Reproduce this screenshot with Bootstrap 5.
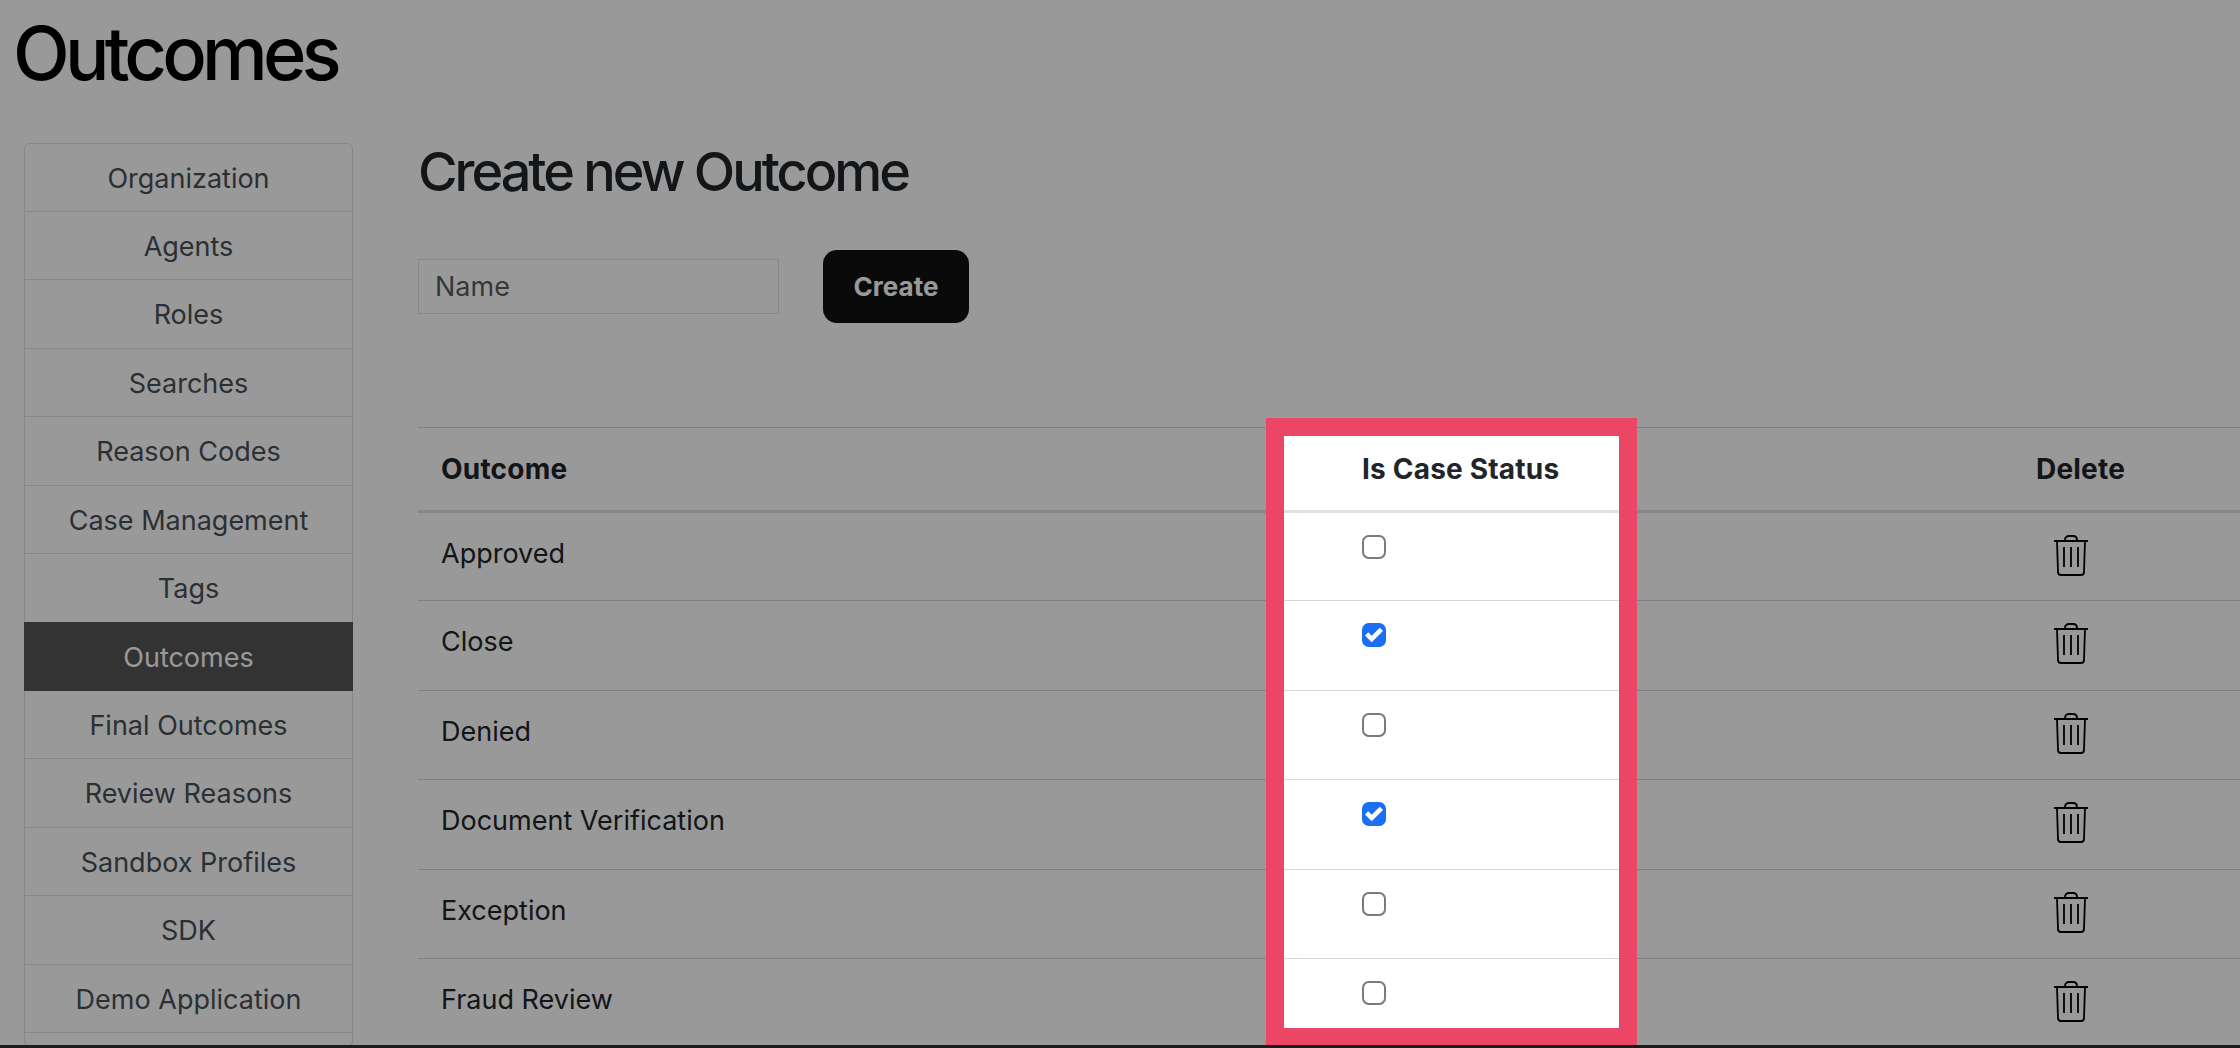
<!DOCTYPE html>
<html lang="en"><head><meta charset="utf-8"><title>Outcomes</title>
<link href="https://cdn.jsdelivr.net/npm/bootstrap@5.3.0/dist/css/bootstrap.min.css" rel="stylesheet">
<style>
html{font-size:27px;height:100%;overflow:hidden}
body{font-family:Inter,"Liberation Sans",sans-serif;height:1048px;overflow:hidden;position:relative;color:#000}
.page-title{font-size:74px;font-weight:500;line-height:72px;letter-spacing:-4.8px;margin:0;padding:17px 0 1px 13px;color:#000}
.side-wrap{width:329px;margin-left:24px;flex:none}
.side-wrap .list-group{border-radius:6px}
.side-wrap .list-group-item{color:#495057;text-align:center;padding:15px 1rem 11px;height:68.57px;line-height:40px;white-space:nowrap}
.side-wrap .list-group-item.active{background:#555;border-color:#555;color:#fff}
.side-wrap .list-group-item.stub-item{height:14px;padding:0}
.main-pane{margin-left:65px;flex:1 1 auto;min-width:0}
.pane-title{font-size:54px;font-weight:500;line-height:60px;letter-spacing:-3px;margin:-1px 0 48px;color:#212529}
.name-input{width:361px;height:55px;border-radius:0;padding:0 16px;font-size:27px}
.create-btn{width:146px;height:73px;border-radius:14px;background:#111;border:0;color:#fff;font-weight:700;font-size:26px;margin-left:44px;padding:0}
.outcome-table{table-layout:fixed;margin:104px 0 0;width:100%}
.outcome-table th,.outcome-table td{padding:21px 23px;border-color:#d3d8dd;line-height:40px}
.outcome-table thead th{border-top:1px solid #d3d8dd;border-bottom:3px solid #dee2e6;height:83px;font-size:28px;letter-spacing:.2px;color:#212529;padding-top:21px;padding-bottom:21px}
.outcome-table tbody td{height:89.4px;padding-top:21px;padding-bottom:23px}
.col-a{width:921px}.col-b{width:674px}.col-c{width:227px}
.form-check-input{margin:1px 0 0;display:block;border:2px solid #7a7a7a;width:24px;height:24px;border-radius:5px;background-size:90%;background-position:45% 50%}
.form-check-input:checked{background-color:#1c6ef2;border-color:#1c6ef2;background-image:url("data:image/svg+xml,%3csvg xmlns='http://www.w3.org/2000/svg' viewBox='0 0 8 8'%3e%3cpath fill='%23fff' d='M6.564.75l-3.59 3.612-1.538-1.55L0 4.26 2.974 7.25 8 2.193z'/%3e%3c/svg%3e")}
.trash-svg{display:block;width:36px;height:41px;margin:1px 0 0 17px}
.spot{position:absolute;left:1266px;top:418px;width:371px;height:628px;border:18px solid #ec4667;box-shadow:0 0 0 3000px rgba(0,0,0,.4);z-index:10;pointer-events:none}
.bottom-strip{position:absolute;left:0;right:0;bottom:0;height:3px;background:#1c1c1c;z-index:11}
</style></head><body>
<h1 class="page-title">Outcomes</h1>
<div class="d-flex" style="padding-top:53px">
  <div class="side-wrap">
    <div class="list-group">
      <a class="list-group-item list-group-item-action" href="#">Organization</a>
      <a class="list-group-item list-group-item-action" href="#">Agents</a>
      <a class="list-group-item list-group-item-action" href="#">Roles</a>
      <a class="list-group-item list-group-item-action" href="#">Searches</a>
      <a class="list-group-item list-group-item-action" href="#">Reason Codes</a>
      <a class="list-group-item list-group-item-action" href="#">Case Management</a>
      <a class="list-group-item list-group-item-action" href="#">Tags</a>
      <a class="list-group-item list-group-item-action active" href="#">Outcomes</a>
      <a class="list-group-item list-group-item-action" href="#">Final Outcomes</a>
      <a class="list-group-item list-group-item-action" href="#">Review Reasons</a>
      <a class="list-group-item list-group-item-action" href="#">Sandbox Profiles</a>
      <a class="list-group-item list-group-item-action" href="#">SDK</a>
      <a class="list-group-item list-group-item-action" href="#">Demo Application</a>
      <div class="list-group-item stub-item"></div>
    </div>
  </div>
  <div class="main-pane">
    <h2 class="pane-title">Create new Outcome</h2>
    <div class="d-flex align-items-center">
      <input class="form-control name-input" type="text" placeholder="Name">
      <button class="btn create-btn" type="button">Create</button>
    </div>
    <table class="table outcome-table">
      <colgroup><col class="col-a"><col class="col-b"><col class="col-c"></colgroup>
      <thead><tr><th>Outcome</th><th>Is Case Status</th><th>Delete</th></tr></thead>
      <tbody>
        <tr><td>Approved</td><td><input class="form-check-input" type="checkbox"></td><td><svg class="trash-svg" viewBox="0 0 36 41" fill="none" stroke="#000" stroke-width="1.8"><path d="M1 6H35M12 5C12 2 14 1 16 1H20C22 1 24 2 24 5M4 6L5 37C5 39 6 40 8 40H28C30 40 31 39 31 37L32 6M11 12V32M18 12V32M25 12V32"/></svg></td></tr>
        <tr><td>Close</td><td><input class="form-check-input" type="checkbox" checked></td><td><svg class="trash-svg" viewBox="0 0 36 41" fill="none" stroke="#000" stroke-width="1.8"><path d="M1 6H35M12 5C12 2 14 1 16 1H20C22 1 24 2 24 5M4 6L5 37C5 39 6 40 8 40H28C30 40 31 39 31 37L32 6M11 12V32M18 12V32M25 12V32"/></svg></td></tr>
        <tr><td>Denied</td><td><input class="form-check-input" type="checkbox"></td><td><svg class="trash-svg" viewBox="0 0 36 41" fill="none" stroke="#000" stroke-width="1.8"><path d="M1 6H35M12 5C12 2 14 1 16 1H20C22 1 24 2 24 5M4 6L5 37C5 39 6 40 8 40H28C30 40 31 39 31 37L32 6M11 12V32M18 12V32M25 12V32"/></svg></td></tr>
        <tr><td>Document Verification</td><td><input class="form-check-input" type="checkbox" checked></td><td><svg class="trash-svg" viewBox="0 0 36 41" fill="none" stroke="#000" stroke-width="1.8"><path d="M1 6H35M12 5C12 2 14 1 16 1H20C22 1 24 2 24 5M4 6L5 37C5 39 6 40 8 40H28C30 40 31 39 31 37L32 6M11 12V32M18 12V32M25 12V32"/></svg></td></tr>
        <tr><td>Exception</td><td><input class="form-check-input" type="checkbox"></td><td><svg class="trash-svg" viewBox="0 0 36 41" fill="none" stroke="#000" stroke-width="1.8"><path d="M1 6H35M12 5C12 2 14 1 16 1H20C22 1 24 2 24 5M4 6L5 37C5 39 6 40 8 40H28C30 40 31 39 31 37L32 6M11 12V32M18 12V32M25 12V32"/></svg></td></tr>
        <tr><td>Fraud Review</td><td><input class="form-check-input" type="checkbox"></td><td><svg class="trash-svg" viewBox="0 0 36 41" fill="none" stroke="#000" stroke-width="1.8"><path d="M1 6H35M12 5C12 2 14 1 16 1H20C22 1 24 2 24 5M4 6L5 37C5 39 6 40 8 40H28C30 40 31 39 31 37L32 6M11 12V32M18 12V32M25 12V32"/></svg></td></tr>
      </tbody>
    </table>
  </div>
</div>
<div class="spot"></div>
<div class="bottom-strip"></div>
</body></html>
